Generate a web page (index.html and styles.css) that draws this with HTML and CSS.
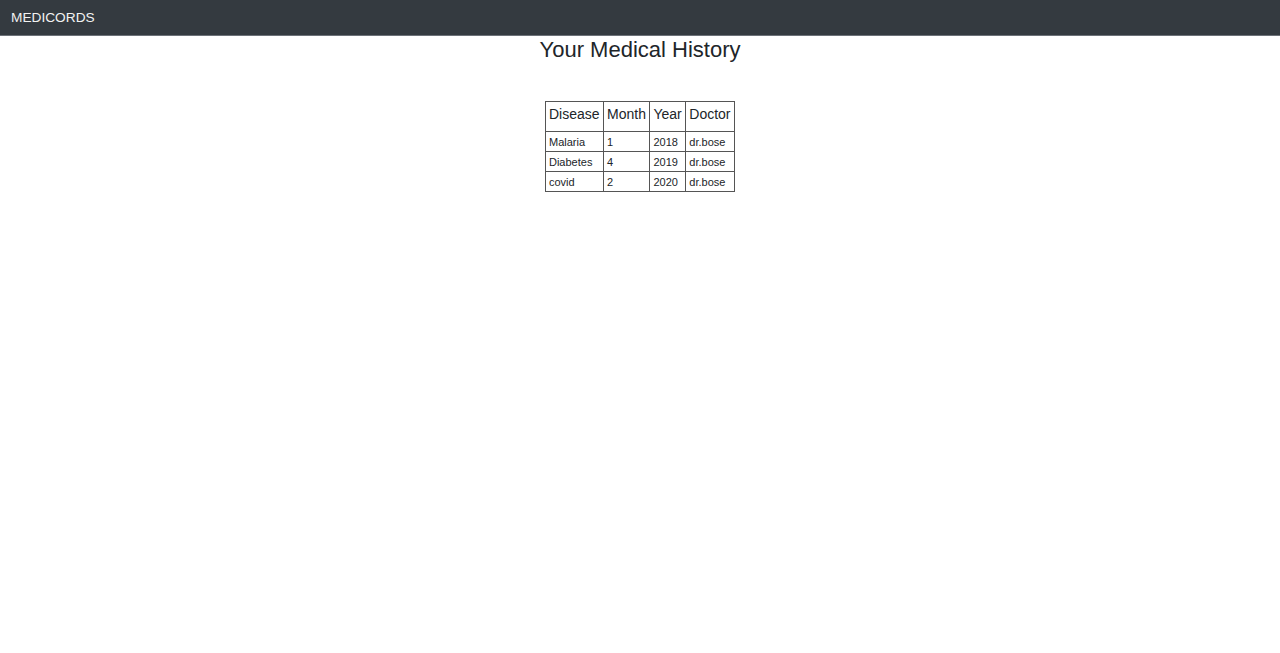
FILE: index.html
```html
<!DOCTYPE html>
<html>
<head>
<meta charset="utf-8">
<link rel="stylesheet" href="styles.css">
</head>
<body>
<nav class="navbar"><span class="brand">MEDICORDS</span></nav>
<main class="content">
<h1 class="title">Your Medical History</h1>
<table class="history">
<thead>
<tr><th>Disease</th><th>Month</th><th>Year</th><th>Doctor</th></tr>
</thead>
<tbody>
<tr><td>Malaria</td><td>1</td><td>2018</td><td>dr.bose</td></tr>
<tr><td>Diabetes</td><td>4</td><td>2019</td><td>dr.bose</td></tr>
<tr><td>covid</td><td>2</td><td>2020</td><td>dr.bose</td></tr>
</tbody>
</table>
</main>
</body>
</html>
```
FILE: styles.css
```css
html, body {
  margin: 0;
  padding: 0;
  background: #fff;
  font-family: "Liberation Sans", Arial, sans-serif;
  color: #212529;
}
.navbar {
  height: 35px;
  background: #343a40;
  border-bottom: 1px solid #6c7178;
  display: flex;
  align-items: center;
  padding: 0 11px;
}
.brand {
  color: #f2f2f2;
  font-size: 13.7px;
}
.content {
  display: flex;
  flex-direction: column;
  align-items: center;
}
.title {
  font-size: 22px;
  font-weight: 400;
  margin: 1px 0 38px;
  line-height: 26px;
}
.history {
  border-collapse: collapse;
  border: 1px solid #444;
}
.history th,
.history td {
  border: 1px solid #555;
  text-align: left;
  padding: 0 3.5px 0 3px;
}
.history th {
  font-weight: 400;
  font-size: 14px;
  height: 25px;
  vertical-align: top;
  padding-top: 4px;
}
.history td {
  font-size: 11px;
  height: 19px;
}
```
